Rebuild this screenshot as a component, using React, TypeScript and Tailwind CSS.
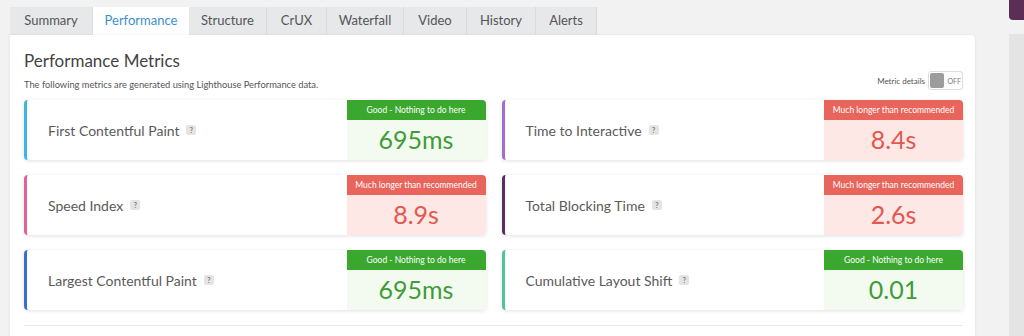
import React from "react";

type Metric = {
  label: string;
  value: string;
  good: boolean;
  border: string;
};

const tabs = ["Summary", "Performance", "Structure", "CrUX", "Waterfall", "Video", "History", "Alerts"];
const tabWidths = ["w-[83px]", "w-[96px]", "w-[78px]", "w-[60px]", "w-[77px]", "w-[63px]", "w-[69px]", "w-[61px]"];

const metrics: Metric[] = [
  { label: "First Contentful Paint", value: "695ms", good: true, border: "border-l-[#3fb3e3]" },
  { label: "Time to Interactive", value: "8.4s", good: false, border: "border-l-[#a56ccb]" },
  { label: "Speed Index", value: "8.9s", good: false, border: "border-l-[#e0629c]" },
  { label: "Total Blocking Time", value: "2.6s", good: false, border: "border-l-[#5c2a68]" },
  { label: "Largest Contentful Paint", value: "695ms", good: true, border: "border-l-[#3d6fc8]" },
  { label: "Cumulative Layout Shift", value: "0.01", good: true, border: "border-l-[#4cc4a0]" },
];

const MetricCard = ({ m }: { m: Metric }) => {
  return (
    <div className={`flex h-[60px] rounded-[4px] bg-white border-l-[3px] ${m.border} shadow-[0_1px_4px_rgba(0,0,0,0.12)]`}>
      <div className="flex flex-1 items-center pl-[21px] pt-[1px] text-[14px] text-[#5a5a5a]">
        {m.label}
        <span className="ml-[7px] flex h-[10px] w-[10px] items-center justify-center rounded-[2px] bg-[#e4e4e4] text-[7px] font-bold leading-none text-[#777]">
          ?
        </span>
      </div>
      <div className="flex w-[139px] flex-col">
        {m.good ? (
          <>
            <div className="flex h-[20px] items-center justify-center rounded-tr-[4px] bg-[#3aa72e] text-[8.5px] text-white">
              Good - Nothing to do here
            </div>
            <div className="flex flex-1 items-center justify-center rounded-br-[4px] bg-[#f3fbf1] text-[25px] text-[#3f9c38]">
              {m.value}
            </div>
          </>
        ) : (
          <>
            <div className="flex h-[20px] items-center justify-center rounded-tr-[4px] bg-[#e9645a] text-[8.5px] text-white">
              Much longer than recommended
            </div>
            <div className="flex flex-1 items-center justify-center rounded-br-[4px] bg-[#fde8e6] text-[25px] text-[#e2574e]">
              {m.value}
            </div>
          </>
        )}
      </div>
    </div>
  );
};

const App = () => {
  return (
    <div
      className="flex h-[336px] w-[1024px] overflow-hidden bg-[#f2f2f2]"
      style={{ fontFamily: "Lato, 'Noto Sans', sans-serif" }}
    >
      {/* main column */}
      <div className="flex w-[975px] flex-col pl-[10px] pt-[7px]">
        <div className="flex h-[28px]">
          {tabs.map((t, i) => (
            <div
              key={t}
              className={`flex items-center justify-center text-[13px] ${tabWidths[i]} ${
                t === "Performance"
                  ? "bg-white text-[#3b8fd1]"
                  : "border-r border-[#d9dcde] bg-[#e6e8ea] text-[#555]"
              }`}
            >
              {t}
            </div>
          ))}
        </div>

        <div className="flex flex-1 flex-col rounded-tr-[4px] bg-white pl-[14px] pr-[12px] pt-[15px] shadow-[0_0_3px_rgba(0,0,0,0.08)]">
          <h2 className="text-[17px] leading-[22px] text-[#444]">Performance Metrics</h2>
          <div className="mt-[6px] flex items-center justify-between">
            <p className="text-[9.3px] text-[#555]">The following metrics are generated using Lighthouse Performance data.</p>
            <div className="-mt-[8px] flex items-center gap-[3px]">
              <span className="text-[8px] text-[#555]">Metric details</span>
              <div className="flex h-[19px] w-[35px] items-center rounded-[3px] border border-[#ddd] p-[1px]">
                <div className="h-[15px] w-[16px] rounded-[2px] bg-[#9c9c9c]" />
                <span className="ml-[3px] text-[7px] text-[#777]">OFF</span>
              </div>
            </div>
          </div>

          <div className="mt-[8px] grid grid-cols-2 gap-x-[16px] gap-y-[15px]">
            {metrics.map((m) => (
              <MetricCard key={m.label} m={m} />
            ))}
          </div>

          <div className="mt-[15px] border-t border-[#e8e8e8]" />
        </div>
      </div>

      {/* right side strip */}
      <div className="ml-[34px] flex flex-1 flex-col">
        <div className="h-[20px] rounded-bl-[4px] bg-[#5c2d55]" />
        <div className="mt-[14px] flex-1 bg-[#e4e4e4]" />
      </div>
    </div>
  );
};

export default App;
